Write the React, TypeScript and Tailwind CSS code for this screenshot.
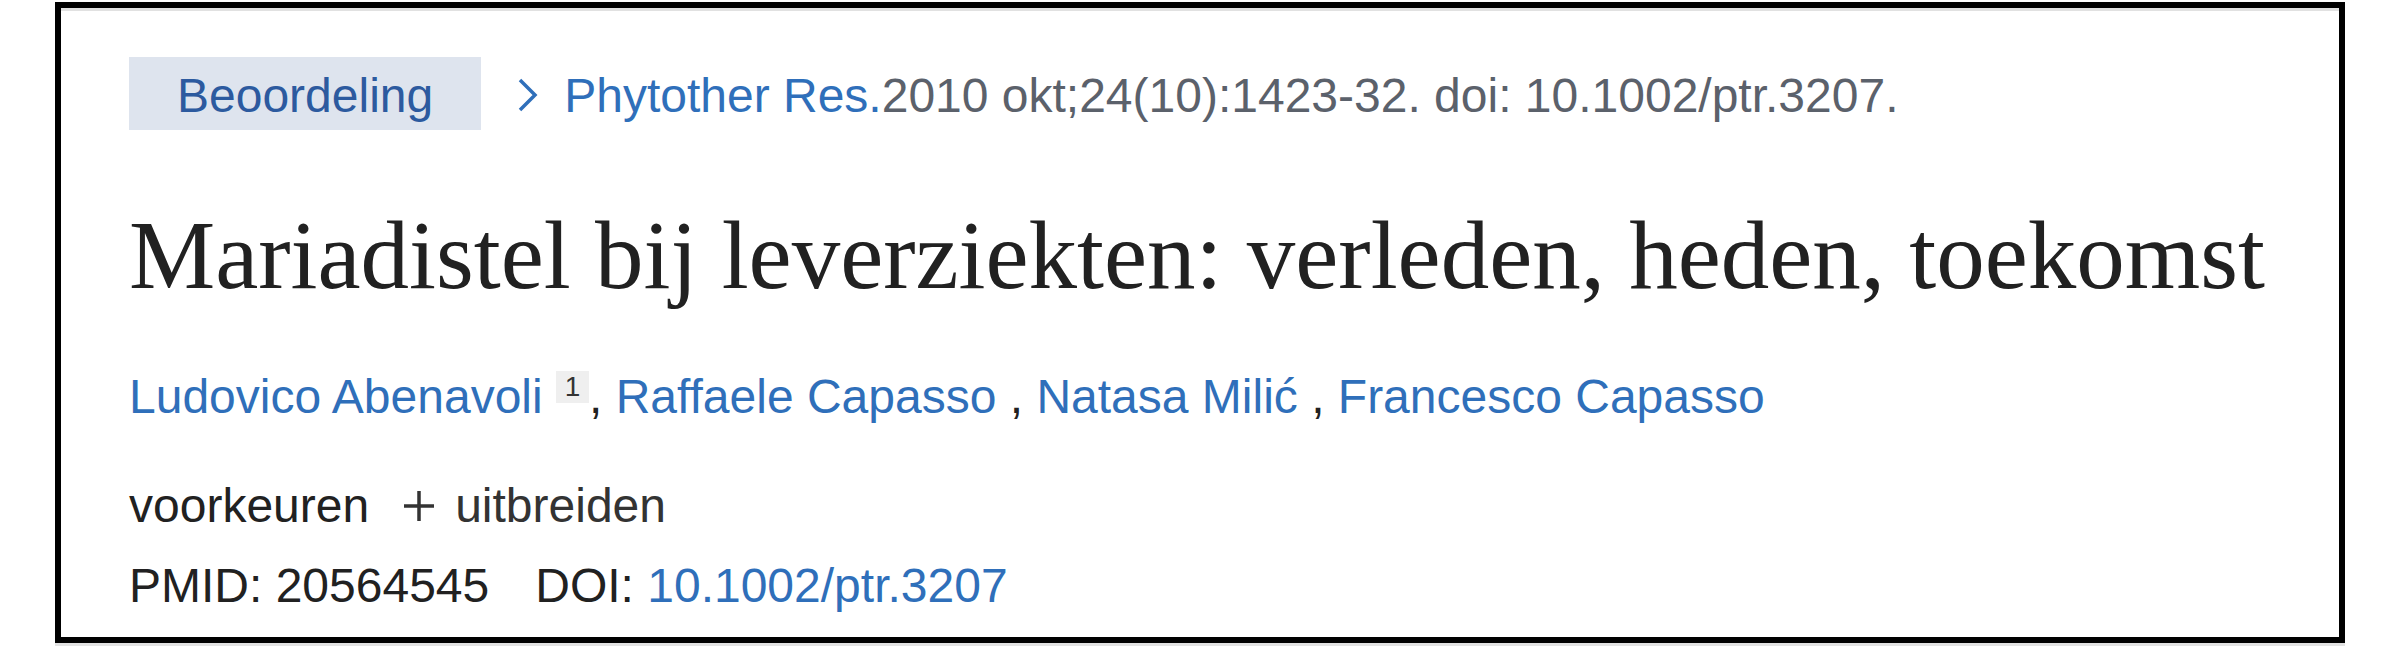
export default function App() {
  return (
    <div className="h-[646px] w-[2400px] bg-white pl-[55px] pt-[2px]">
      <div className="h-[641px] w-[2290px] border-[6px] border-black">
        <div className="h-full border-t-[3px] border-[#e1e1e1] pl-[68px] pt-[46px] font-['Liberation_Sans',Arial,sans-serif] text-[48px] leading-[48px] text-[#212121]">
          <div className="flex items-baseline whitespace-nowrap">
            <span className="bg-[#dee4ee] px-[48px] pb-[10px] pt-[15px] text-[#2c5a9f]">
              Beoordeling
            </span>
            <svg
              className="ml-[35px] h-[34px] w-[22px]"
              viewBox="0 0 22 34"
              fill="none"
              stroke="#2f6fba"
              strokeWidth="3.5"
            >
              <path d="M4 2 L19 17 L4 32" />
            </svg>
            <span className="ml-[26px] text-[#5b616b]">
              <a className="text-[#2f6fba]">Phytother Res.</a>2010 okt;24(10):1423-32. doi: 10.1002/ptr.3207.
            </span>
          </div>

          <h1 className="mt-[77px] whitespace-nowrap font-['Liberation_Serif','Times_New_Roman',serif] text-[97px] leading-[97px] text-[#212121]">
            Mariadistel bij leverziekten: verleden, heden, toekomst
          </h1>

          <div className="mt-[67px] whitespace-nowrap">
            <a className="text-[#2f6fba]">Ludovico Abenavoli</a>{" "}
            <span className="inline-block h-[32px] w-[33px] bg-[#efefef] text-center align-[17px] text-[28px] leading-[32px] text-[#333]">
              1
            </span>
            , <a className="text-[#2f6fba]">Raffaele Capasso</a> ,{" "}
            <a className="text-[#2f6fba]">Natasa Milić</a> ,{" "}
            <a className="text-[#2f6fba]">Francesco Capasso</a>
          </div>

          <div className="mt-[61px] flex items-center">
            <span>voorkeuren</span>
            <svg
              className="ml-[33px] h-[34px] w-[34px]"
              viewBox="0 0 34 34"
              fill="none"
              stroke="#333"
              strokeWidth="3.5"
            >
              <path d="M17 2 V32 M2 17 H32" />
            </svg>
            <span className="ml-[19px] text-[#333]">uitbreiden</span>
          </div>

          <div className="mt-[32px] whitespace-nowrap">
            <span>PMID: 20564545</span>
            <span className="ml-[46px]">DOI: </span>
            <a className="text-[#2f6fba]">10.1002/ptr.3207</a>
          </div>
        </div>
      </div>
      <div className="h-[3px] w-[2290px] bg-[#e2e2e2]" />
    </div>
  );
}
